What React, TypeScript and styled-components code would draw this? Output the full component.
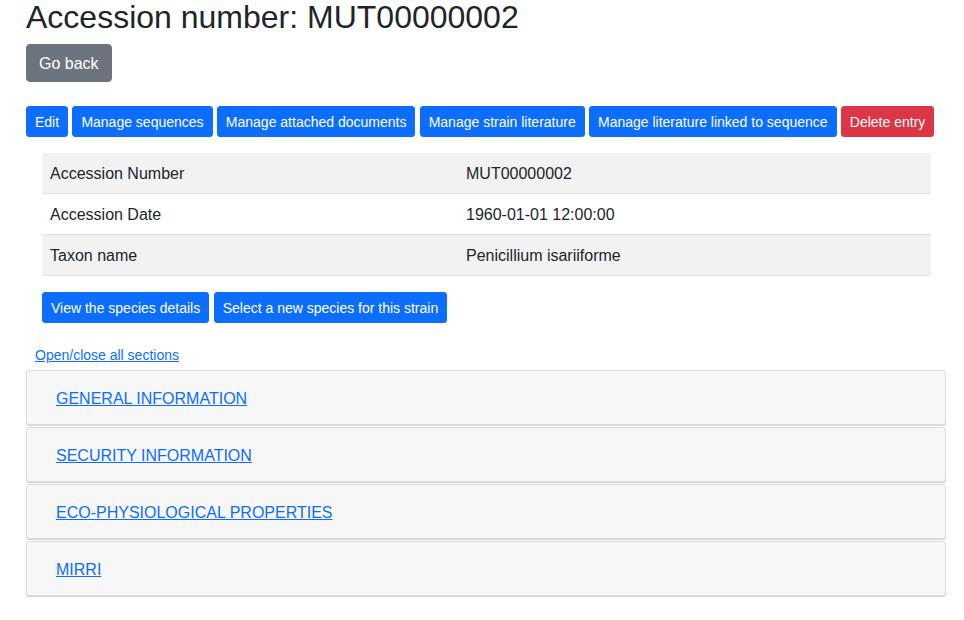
import React from "react";
import styled, { createGlobalStyle } from "styled-components";

const Global = createGlobalStyle`
  html, body { margin: 0; padding: 0; background: #fff; }
  body {
    font-family: "Liberation Sans", Arial, sans-serif;
    color: #212529;
    font-size: 16px;
    line-height: 1.5;
  }
  * { box-sizing: border-box; }
`;

const Page = styled.div`
  width: 920px;
  margin-left: 26px;
  padding-bottom: 20px;
`;

const Title = styled.h1`
  margin: 0;
  font-size: 32px;
  font-weight: 400;
  line-height: 36px;
  margin-top: -1px;
  color: #212529;
`;

const Btn = styled.button<{ $variant?: "primary" | "secondary" | "danger"; $size?: "sm" | "md" }>`
  display: inline-block;
  font-family: inherit;
  color: #fff;
  border: 1px solid
    ${(p) => (p.$variant === "secondary" ? "#6c757d" : p.$variant === "danger" ? "#dc3545" : "#0d6efd")};
  background: ${(p) => (p.$variant === "secondary" ? "#6c757d" : p.$variant === "danger" ? "#dc3545" : "#0d6efd")};
  font-size: ${(p) => (p.$size === "md" ? "16px" : "14px")};
  line-height: ${(p) => (p.$size === "md" ? "24px" : "21px")};
  height: ${(p) => (p.$size === "md" ? "38px" : "31px")};
  padding: ${(p) => (p.$size === "md" ? "7px 12px 5px" : "5px 8px 3px")};
  border-radius: ${(p) => (p.$size === "md" ? "4px" : "3px")};
  white-space: nowrap;
  cursor: pointer;
`;

const BackRow = styled.div`
  margin-top: 9px;
  display: flex;
`;

const ActionRow = styled.div`
  margin-top: 24px;
  display: flex;
  gap: 4.25px;
`;

const Inset = styled.div`
  padding: 0 15px 0 16px;
  margin-top: 16px;
`;

const Table = styled.table`
  width: 100%;
  border-collapse: collapse;
  margin-bottom: 16px;
`;

const Row = styled.tr<{ $striped?: boolean }>`
  background: ${(p) => (p.$striped ? "#f2f2f2" : "#fff")};
  border-bottom: 1px solid #dee2e6;
`;

const Cell = styled.td<{ $w?: number }>`
  padding: 9px 8px 7px;
  height: 40px;
  font-size: 16px;
  line-height: 24px;
  color: #212529;
  width: ${(p) => (p.$w ? `${p.$w}px` : "auto")};
  vertical-align: top;
`;

const SpeciesRow = styled.div`
  display: flex;
  gap: 4.5px;
`;

const ToggleLink = styled.a`
  display: block;
  margin: 22px 0 0 9px;
  font-size: 14px;
  line-height: 21px;
  color: #0d6efd;
  text-decoration: underline;
  cursor: pointer;
`;

const Accordion = styled.div`
  margin-top: 4px;
  display: flex;
  flex-direction: column;
  gap: 2px;
`;

const Card = styled.div`
  height: 55px;
  display: flex;
  align-items: center;
  padding-left: 29px;
  padding-top: 2px;
  background: #f7f7f7;
  border: 1px solid #dcdcdc;
  border-radius: 3px;
  box-shadow: 0 1px 1px rgba(0, 0, 0, 0.18);
`;

const CardLink = styled.a`
  font-size: 16px;
  line-height: 24px;
  color: #0d6efd;
  text-decoration: underline;
  cursor: pointer;
`;

const rows: [string, string][] = [
  ["Accession Number", "MUT00000002"],
  ["Accession Date", "1960-01-01 12:00:00"],
  ["Taxon name", "Penicillium isariiforme"],
];

const sections = [
  "GENERAL INFORMATION",
  "SECURITY INFORMATION",
  "ECO-PHYSIOLOGICAL PROPERTIES",
  "MIRRI",
];

export default function App() {
  return (
    <>
      <Global />
      <Page>
        <Title>Accession number: MUT00000002</Title>
        <BackRow>
          <Btn $variant="secondary" $size="md">Go back</Btn>
        </BackRow>
        <ActionRow>
          <Btn>Edit</Btn>
          <Btn>Manage sequences</Btn>
          <Btn>Manage attached documents</Btn>
          <Btn>Manage strain literature</Btn>
          <Btn>Manage literature linked to sequence</Btn>
          <Btn $variant="danger">Delete entry</Btn>
        </ActionRow>
        <Inset>
          <Table>
            <tbody>
              {rows.map(([k, v], i) => (
                <Row key={k} $striped={i % 2 === 0}>
                  <Cell $w={416}>{k}</Cell>
                  <Cell>{v}</Cell>
                </Row>
              ))}
            </tbody>
          </Table>
          <SpeciesRow>
            <Btn>View the species details</Btn>
            <Btn>Select a new species for this strain</Btn>
          </SpeciesRow>
        </Inset>
        <ToggleLink>Open/close all sections</ToggleLink>
        <Accordion>
          {sections.map((s) => (
            <Card key={s}>
              <CardLink>{s}</CardLink>
            </Card>
          ))}
        </Accordion>
      </Page>
    </>
  );
}
